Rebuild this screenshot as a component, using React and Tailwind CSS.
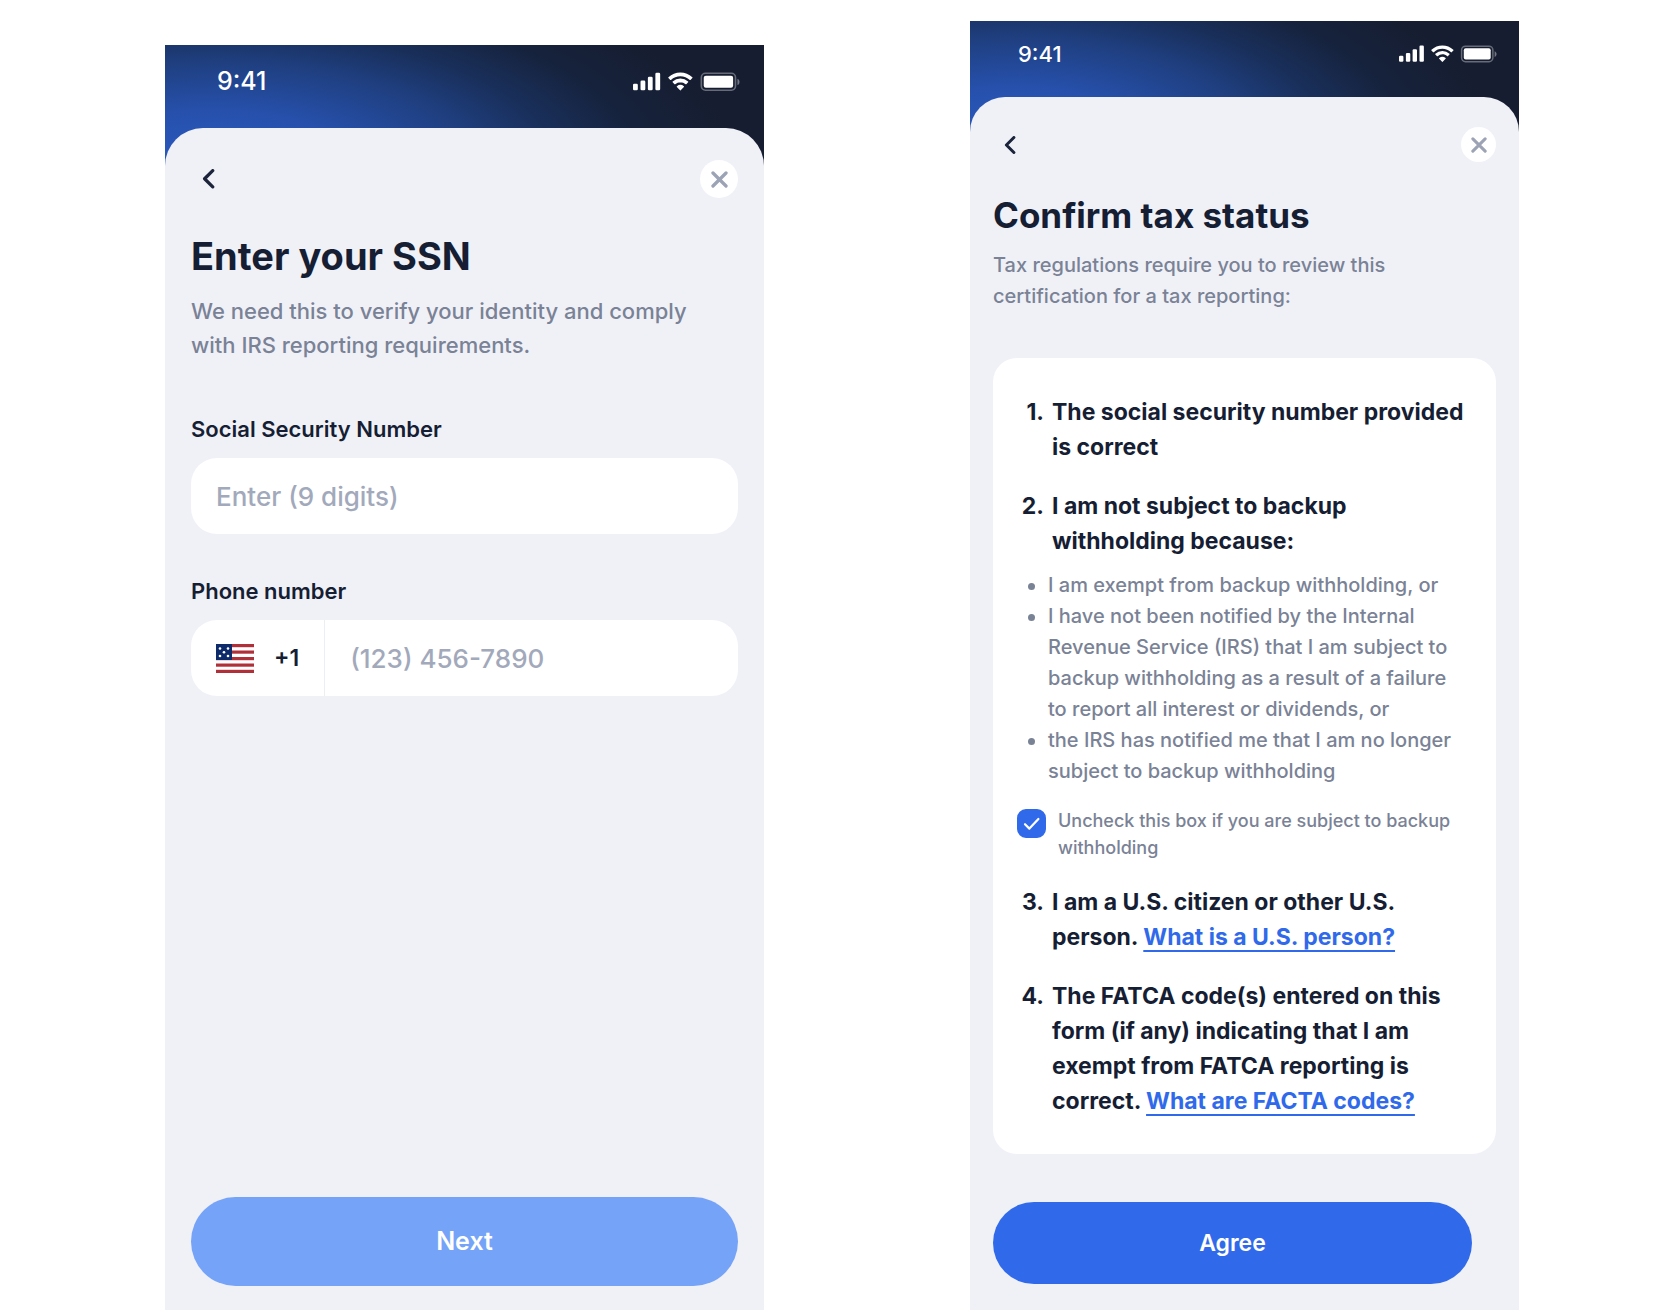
import React, { useState } from "react";
import clsx from "clsx";

function StatusIcons({ className }) {
  return (
    <svg viewBox="0 0 67 12" fill="none" className={className} aria-hidden="true">
      {/* signal */}
      <rect x="0" y="7.4" width="3" height="4" rx="0.8" fill="#fff" />
      <rect x="4.7" y="5.4" width="3" height="6" rx="0.8" fill="#fff" />
      <rect x="9.3" y="2.9" width="3" height="8.5" rx="0.8" fill="#fff" />
      <rect x="14" y="0.4" width="3" height="11" rx="0.8" fill="#fff" />
      {/* wifi */}
      <path
        d="M29.67 2.6c2.2 0 4.3.85 5.9 2.36.12.12.31.11.43 0l1.15-1.17a.32.32 0 0 0 0-.46 10.85 10.85 0 0 0-14.96 0 .32.32 0 0 0 0 .46l1.15 1.16c.12.12.31.12.43 0a8.58 8.58 0 0 1 5.9-2.35Z"
        fill="#fff"
      />
      <path
        d="M29.67 6.4c1.2 0 2.37.45 3.26 1.26.12.12.31.11.43-.01l1.15-1.16a.32.32 0 0 0 0-.47 7.04 7.04 0 0 0-9.67 0 .32.32 0 0 0 0 .47L26 7.65c.12.12.3.13.42.01a4.84 4.84 0 0 1 3.26-1.26Z"
        fill="#fff"
      />
      <path
        d="M31.96 9.2a.32.32 0 0 1-.1.24l-1.98 2a.3.3 0 0 1-.43 0l-1.99-2a.32.32 0 0 1 .02-.47 3.4 3.4 0 0 1 4.38 0c.06.06.1.14.1.23Z"
        fill="#fff"
      />
      {/* battery */}
      <rect x="42.8" y="0.8" width="21.4" height="10.6" rx="2.6" stroke="#fff" strokeOpacity="0.35" />
      <path d="M65.4 4.2v4c.8-.34 1.3-1.13 1.3-2s-.5-1.66-1.3-2Z" fill="#fff" fillOpacity="0.4" />
      <rect x="44.3" y="2.3" width="18.4" height="7.6" rx="1.3" fill="#fff" />
    </svg>
  );
}

function BackIcon({ className }) {
  return (
    <svg viewBox="0 0 8 12" fill="none" className={className} aria-hidden="true">
      <path d="M6.6 1 1.6 6l5 5" stroke="#1b243b" strokeWidth="2" strokeLinecap="round" strokeLinejoin="round" />
    </svg>
  );
}

function CloseIcon({ className }) {
  return (
    <svg viewBox="0 0 12 12" fill="none" className={className} aria-hidden="true">
      <path d="m1.4 1.4 9.2 9.2m0-9.2-9.2 9.2" stroke="#9ca3b5" strokeWidth="2.3" strokeLinecap="round" />
    </svg>
  );
}

function UsFlag({ className }) {
  return (
    <svg viewBox="0 0 38 29" className={className} aria-hidden="true">
      <rect width="38" height="29" fill="#fff" />
      {[0, 6.5, 13, 19.5, 25.8].map((y) => (
        <rect key={y} y={y} width="38" height="3.2" fill="#b0303a" />
      ))}
      <rect width="16" height="16" fill="#0d2a6b" />
      {[[4, 4.5], [12, 4.5], [8, 8.2], [4, 12], [12, 12]].map(([cx, cy]) => (
        <circle key={`${cx}-${cy}`} cx={cx} cy={cy} r="1.3" fill="#fff" />
      ))}
    </svg>
  );
}

function PhoneScreen({ large, children }) {
  return (
    <section className="flex min-w-0 flex-col bg-[#161d30] bg-[radial-gradient(ellipse_88%_215px_at_8%_125px,#2b5cc4_0%,#2650ab_28%,#1f3f80_50%,#192f5a_66%,#16223c_82%,#161d30_100%)] bg-no-repeat">
      <div
        className={clsx(
          "flex items-center justify-between pb-[10px] font-medium text-white",
          large ? "h-[83px] pr-6 pl-[52px] text-[25px]" : "h-[76px] pr-[22px] pl-12 text-[22px]"
        )}
      >
        <span>9:41</span>
        <StatusIcons className={large ? "w-[107px]" : "w-[98px]"} />
      </div>
      <div
        className={clsx(
          "flex flex-1 flex-col bg-[#f0f1f7]",
          large ? "rounded-t-[38px] px-[26px] pt-8 pb-6" : "rounded-t-[35px] px-[23px] pt-[30px] pb-[26px]"
        )}
      >
        <div className="flex items-center justify-between">
          <button type="button" aria-label="Back" className="pl-[11px]">
            <BackIcon className={large ? "w-[13px]" : "w-3"} />
          </button>
          <button
            type="button"
            aria-label="Close"
            className={clsx("flex items-center justify-center rounded-full bg-white", large ? "size-[38px]" : "size-[35px]")}
          >
            <CloseIcon className={large ? "size-[17px]" : "size-4"} />
          </button>
        </div>
        {children}
      </div>
    </section>
  );
}

function SsnScreen() {
  const [ssn, setSsn] = useState("");
  const [phone, setPhone] = useState("");

  return (
    <PhoneScreen large>
      <h1 className="mt-[35px] text-[38px] leading-[46px] font-bold">Enter your SSN</h1>
      <p className="mt-[15px] pr-8 text-[22px] leading-[34px] font-medium text-[#7a8296]">
        We need this to verify your identity and comply with IRS reporting requirements.
      </p>

      <label htmlFor="ssn" className="mt-[50px] text-[22px] leading-[34px] font-semibold">
        Social Security Number
      </label>
      <input
        id="ssn"
        value={ssn}
        onChange={(e) => setSsn(e.target.value)}
        placeholder="Enter (9 digits)"
        className="mt-3 h-[76px] rounded-[26px] bg-white px-[25px] text-[26px] font-medium outline-none placeholder:text-[#a2a9bb]"
      />

      <label htmlFor="phone" className="mt-10 text-[22px] leading-[34px] font-semibold">
        Phone number
      </label>
      <div className="mt-3 flex h-[76px] overflow-hidden rounded-[26px] bg-white">
        <div className="flex items-center gap-5 border-r border-[#eceef3] px-[25px] text-[23px] font-semibold">
          <UsFlag className="w-[38px]" />
          +1
        </div>
        <input
          id="phone"
          type="tel"
          value={phone}
          onChange={(e) => setPhone(e.target.value)}
          placeholder="(123) 456-7890"
          className="min-w-0 flex-1 px-[25px] text-[26px] font-medium outline-none placeholder:text-[#a2a9bb]"
        />
      </div>

      <button type="button" className="mt-auto h-[89px] rounded-full bg-[#75a3f8] text-[25px] font-semibold text-white">
        Next
      </button>
    </PhoneScreen>
  );
}

function Item({ number, children }) {
  return (
    <li className="flex text-[23px] leading-[35px] font-bold">
      <span className="w-[51px] shrink-0 pr-2 text-right">{number}.</span>
      <p>{children}</p>
    </li>
  );
}

function HelpLink({ children }) {
  return (
    <a href="#" className="text-[#306aea] underline decoration-2 underline-offset-[5px] [text-decoration-skip-ink:none]">
      {children}
    </a>
  );
}

const exemptions = [
  "I am exempt from backup withholding, or",
  "I have not been notified by the Internal Revenue Service (IRS) that I am subject to backup withholding as a result of a failure to report all interest or dividends, or",
  "the IRS has notified me that I am no longer subject to backup withholding",
];

function TaxScreen() {
  const [checked, setChecked] = useState(true);

  return (
    <PhoneScreen>
      <h1 className="mt-[31px] text-[35px] leading-[44px] font-bold">Confirm tax status</h1>
      <p className="mt-[13px] text-[20px] leading-[31px] font-medium text-[#7a8296]">
        Tax regulations require you to review this certification for a tax reporting:
      </p>

      <div className="mt-[46px] rounded-3xl bg-white pt-[37px] pr-4 pb-[35px] pl-2">
        <ol className="flex flex-col gap-6">
          <Item number={1}>The social security number provided is correct</Item>
          <li>
            <ol>
              <Item number={2}>I am not subject to backup withholding because:</Item>
            </ol>
            <ul className="mt-[11px] mr-4 ml-[47px] list-none text-[20px] leading-[31px] font-medium text-[#7a8296]">
              {exemptions.map((text) => (
                <li key={text} className="relative">
                  <span className="absolute top-[13px] -left-5 size-[7px] rounded-full bg-[#7a8296]" />
                  {text}
                </li>
              ))}
            </ul>
            <label className="mt-5 mr-4 ml-4 flex gap-3 text-[18px] leading-[27px] font-medium text-[#7a8296]">
              <span className="relative mt-0.5 size-[29px] shrink-0">
                <input
                  type="checkbox"
                  checked={checked}
                  onChange={() => setChecked(!checked)}
                  className="peer block size-full appearance-none rounded-[9px] border-2 border-[#306aea] checked:bg-[#306aea]"
                />
                <svg
                  viewBox="0 0 29 29"
                  fill="none"
                  className="pointer-events-none absolute inset-0 hidden peer-checked:block"
                  aria-hidden="true"
                >
                  <path d="m8 15.2 4.4 4.4L21.4 10" stroke="#fff" strokeWidth="2.2" strokeLinecap="round" strokeLinejoin="round" />
                </svg>
              </span>
              Uncheck this box if you are subject to backup withholding
            </label>
          </li>
          <Item number={3}>
            I am a U.S. citizen or other U.S. person. <HelpLink>What is a U.S. person?</HelpLink>
          </Item>
          <Item number={4}>
            The FATCA code(s) entered on this form (if any) indicating that I am exempt from FATCA reporting is correct.{" "}
            <HelpLink>What are FACTA codes?</HelpLink>
          </Item>
        </ol>
      </div>

      <button type="button" className="mt-auto mr-6 h-[82px] rounded-full bg-[#306aea] text-[23px] font-semibold text-white">
        Agree
      </button>
    </PhoneScreen>
  );
}

export default function App() {
  return (
    <main className="grid min-h-screen grid-cols-[minmax(0,599fr)_minmax(0,549fr)] gap-[206px] bg-white pr-[137px] pl-[165px] font-['Inter',sans-serif] text-[#161e34]">
      <div className="grid min-w-0 grid-cols-1 pt-[45px]">
        <SsnScreen />
      </div>
      <div className="grid min-w-0 grid-cols-1 pt-[21px]">
        <TaxScreen />
      </div>
    </main>
  );
}
